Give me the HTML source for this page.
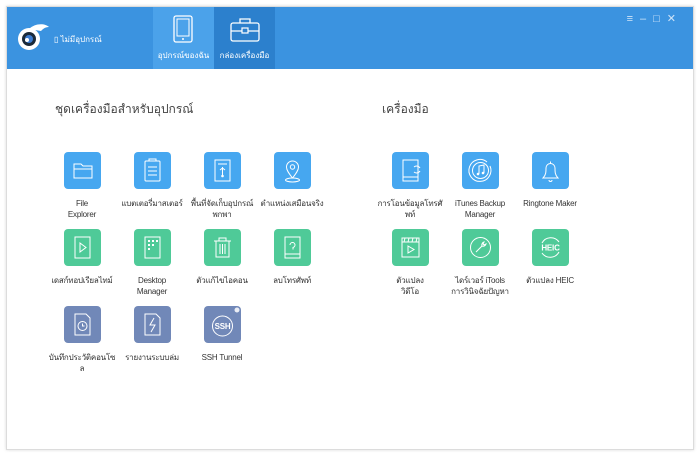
<!DOCTYPE html>
<html><head><meta charset="utf-8"><style>
*{margin:0;padding:0;box-sizing:border-box}
body{width:700px;height:456px;background:#fff;font-family:"Liberation Sans","Noto Sans CJK SC",sans-serif;position:relative;overflow:hidden}
.win{position:absolute;left:6px;top:6px;width:688px;height:444px;border:1px solid #dcdcdc;background:#fff;box-shadow:0 0 3px rgba(0,0,0,.15)}
.hdr{position:absolute;left:0;top:0;width:686px;height:62px;background:#3b93e0}
.tab{position:absolute;top:0;height:62px;width:61px;color:#fff;font-size:8px;text-align:center}
.tab span{position:absolute;bottom:7px;left:0;right:0}
.ttl{position:absolute;top:93px;font-size:12px;color:#444}
.it{position:absolute;width:90px;text-align:center;font-size:8px;color:#333;line-height:11px;white-space:nowrap;letter-spacing:-0.2px}
.ic{width:37px;height:37px;border-radius:4px;margin:0 auto 9px;position:relative}
.b{background:#46a7f0}.g{background:#4fca98}.s{background:#7188b8}
.ic svg{position:absolute;left:0;top:0}
</style></head><body>
<div class="win">
<div class="hdr">
 <svg style="position:absolute;left:10px;top:16px" width="34" height="28" viewBox="0 0 34 28"><path d="M12 6 C18 0 28 0 32 4 C28 4 26 6 24 8" fill="#fff"/><circle cx="12" cy="16" r="11" fill="#fff"/><circle cx="12" cy="16" r="7" fill="#1b2a3a"/><circle cx="12" cy="16" r="4" fill="#3b7bd0"/><circle cx="10" cy="17" r="2" fill="#fff"/></svg>
 <div style="position:absolute;left:47px;top:26px;color:#fff;font-size:8px">▯ ไม่มีอุปกรณ์</div>
 <div class="tab" style="left:146px;background:#4ba2ea"><svg style="position:absolute;left:20px;top:8px" width="20" height="28" viewBox="0 0 20 28"><rect x="1" y="1" width="18" height="26" rx="2" fill="none" stroke="#fff" stroke-width="1.3"/><rect x="4" y="4" width="12" height="17" fill="none" stroke="#fff" stroke-width="1"/><circle cx="10" cy="24" r="1" fill="#fff"/></svg><span>อุปกรณ์ของฉัน</span></div>
 <div class="tab" style="left:207px;background:#2c80cd"><svg style="position:absolute;left:16px;top:11px" width="30" height="24" viewBox="0 0 30 24"><rect x="1" y="5" width="28" height="18" rx="2" fill="none" stroke="#fff" stroke-width="1.3"/><path d="M10 5V1h10v4M1 13h11M18 13h11" fill="none" stroke="#fff" stroke-width="1.3"/><rect x="12" y="10" width="6" height="5" fill="none" stroke="#fff" stroke-width="1.2"/></svg><span>กล่องเครื่องมือ</span></div>
 <div style="position:absolute;right:10px;top:5px;color:#cfe4f8;font-size:11px;letter-spacing:7px">≡–□✕</div>
</div>
<div class="ttl" style="left:48px">ชุดเครื่องมือสำหรับอุปกรณ์</div>
<div class="ttl" style="left:375px">เครื่องมือ</div>
</div>
<!-- left grid -->
<div class="it" style="left:37px;top:152px"><div class="ic b"><svg width="37" height="37"><path d="M10 12h7l2 2h9v12H10z M10 17h18" fill="none" stroke="#fff" stroke-width="1"/></svg></div>File<br>Explorer</div>
<div class="it" style="left:107px;top:152px"><div class="ic b"><svg width="37" height="37"><rect x="11" y="9" width="15" height="20" rx="1" fill="none" stroke="#fff"/><path d="M15 9V7h7v2M14 15h9M14 19h9M14 23h9" stroke="#fff" fill="none"/></svg></div>แบตเตอรี่มาสเตอร์</div>
<div class="it" style="left:177px;top:152px"><div class="ic b"><svg width="37" height="37"><path d="M11 8h15v21H11z" fill="none" stroke="#fff"/><path d="M14 12h9M18.5 15v9M16 18l2.5-2 2.5 2" stroke="#fff" fill="none"/><circle cx="18.5" cy="24" r="1.3" fill="#fff"/></svg></div>พื้นที่จัดเก็บอุปกรณ์<br>พกพา</div>
<div class="it" style="left:247px;top:152px"><div class="ic b"><svg width="37" height="37"><path d="M18.5 26c-4-5-6-8-6-11a6 6 0 0 1 12 0c0 3-2 6-6 11z" fill="none" stroke="#fff"/><circle cx="18.5" cy="15" r="2.2" fill="none" stroke="#fff"/><ellipse cx="18.5" cy="28" rx="7" ry="2" fill="none" stroke="#fff"/></svg></div>ตำแหน่งเสมือนจริง</div>
<div class="it" style="left:37px;top:229px"><div class="ic g"><svg width="37" height="37"><rect x="11" y="8" width="15" height="21" fill="none" stroke="#fff"/><path d="M16 14l6 4.5-6 4.5z" fill="none" stroke="#fff"/></svg></div>เดสก์ทอปเรียลไทม์</div>
<div class="it" style="left:107px;top:229px"><div class="ic g"><svg width="37" height="37"><rect x="11" y="8" width="15" height="21" fill="none" stroke="#fff"/><path d="M14 11h2v2h-2zM18 11h2v2h-2zM22 11h2v2h-2zM14 15h2v2h-2zM18 15h2v2h-2zM14 19h2v2h-2z" fill="#fff"/></svg></div>Desktop<br>Manager</div>
<div class="it" style="left:177px;top:229px"><div class="ic g"><svg width="37" height="37"><path d="M10 12h17M15 12V9h7v3M12 12v16h13V12M16 15v10M18.5 15v10M21 15v10" fill="none" stroke="#fff"/></svg></div>ตัวแก้ไขไอคอน</div>
<div class="it" style="left:247px;top:229px"><div class="ic g"><svg width="37" height="37"><rect x="11" y="8" width="15" height="21" fill="none" stroke="#fff"/><path d="M11 25h15M16 16a2.5 2.5 0 1 1 3 2.5v2" fill="none" stroke="#fff"/></svg></div>ลบโทรศัพท์</div>
<div class="it" style="left:37px;top:306px"><div class="ic s"><svg width="37" height="37"><path d="M11 8h11l4 4v17H11z" fill="none" stroke="#fff"/><circle cx="18.5" cy="20" r="4.5" fill="none" stroke="#fff"/><path d="M18.5 17.5v2.5h2" fill="none" stroke="#fff"/></svg></div>บันทึกประวัติคอนโซ<br>ล</div>
<div class="it" style="left:107px;top:306px"><div class="ic s"><svg width="37" height="37"><path d="M11 8h11l4 4v17H11z" fill="none" stroke="#fff"/><path d="M20 12l-4 7h5l-4 7" fill="none" stroke="#fff"/></svg></div>รายงานระบบล่ม</div>
<div class="it" style="left:177px;top:306px"><div class="ic s"><svg width="37" height="37"><circle cx="18.5" cy="20" r="10" fill="none" stroke="#fff"/><text x="18.5" y="23" font-size="8" fill="#fff" text-anchor="middle" font-family="Liberation Sans" font-weight="bold">SSH</text><circle cx="33" cy="4" r="2.5" fill="#fff" opacity=".85"/></svg></div>SSH Tunnel</div>
<!-- right grid -->
<div class="it" style="left:365px;top:152px"><div class="ic b"><svg width="37" height="37"><rect x="11" y="8" width="15" height="21" fill="none" stroke="#fff"/><path d="M11 25h15M22 15a4 4 0 0 1 6 1M28 19a4 4 0 0 1-6 1" fill="none" stroke="#fff"/></svg></div>การโอนข้อมูลโทรศั<br>พท์</div>
<div class="it" style="left:435px;top:152px"><div class="ic b"><svg width="37" height="37"><path d="M28 14a11 11 0 1 1-3-4" fill="none" stroke="#fff"/><circle cx="18.5" cy="18.5" r="8" fill="none" stroke="#fff"/><path d="M17 22V14l5-1v8" fill="none" stroke="#fff"/><circle cx="16" cy="22" r="1.3" fill="#fff"/><circle cx="21" cy="21" r="1.3" fill="#fff"/></svg></div>iTunes Backup<br>Manager</div>
<div class="it" style="left:505px;top:152px"><div class="ic b"><svg width="37" height="37"><path d="M11 26h15c-3-3-3-6-3-10a4.5 4.5 0 0 0-9 0c0 4 0 7-3 10zM18.5 11.5v-2M17 28a1.5 1.5 0 0 0 3 0" fill="none" stroke="#fff"/></svg></div>Ringtone Maker</div>
<div class="it" style="left:365px;top:229px"><div class="ic g"><svg width="37" height="37"><rect x="10" y="9" width="17" height="19" fill="none" stroke="#fff"/><path d="M10 13h17M13 9l-1 4M17 9l-1 4M21 9l-1 4M25 9l-1 4M16 17l6 3.5-6 3.5z" fill="none" stroke="#fff"/></svg></div>ตัวแปลง<br>วิดีโอ</div>
<div class="it" style="left:435px;top:229px"><div class="ic g"><svg width="37" height="37"><circle cx="18.5" cy="18.5" r="10" fill="none" stroke="#fff"/><path d="M14 23l6-6a3 3 0 0 1 2-4l-1 2 1 1 2-1a3 3 0 0 1-4 2l-6 6z" fill="none" stroke="#fff"/></svg></div>ไดร์เวอร์ iTools<br>การวินิจฉัยปัญหา</div>
<div class="it" style="left:505px;top:229px"><div class="ic g"><svg width="37" height="37"><path d="M27 13a10 10 0 0 0-17 1M10 24a10 10 0 0 0 17-1" fill="none" stroke="#fff"/><text x="18.5" y="21.5" font-size="8" fill="#fff" text-anchor="middle" font-family="Liberation Sans" font-weight="bold">HEIC</text></svg></div>ตัวแปลง HEIC</div>
</body></html>
